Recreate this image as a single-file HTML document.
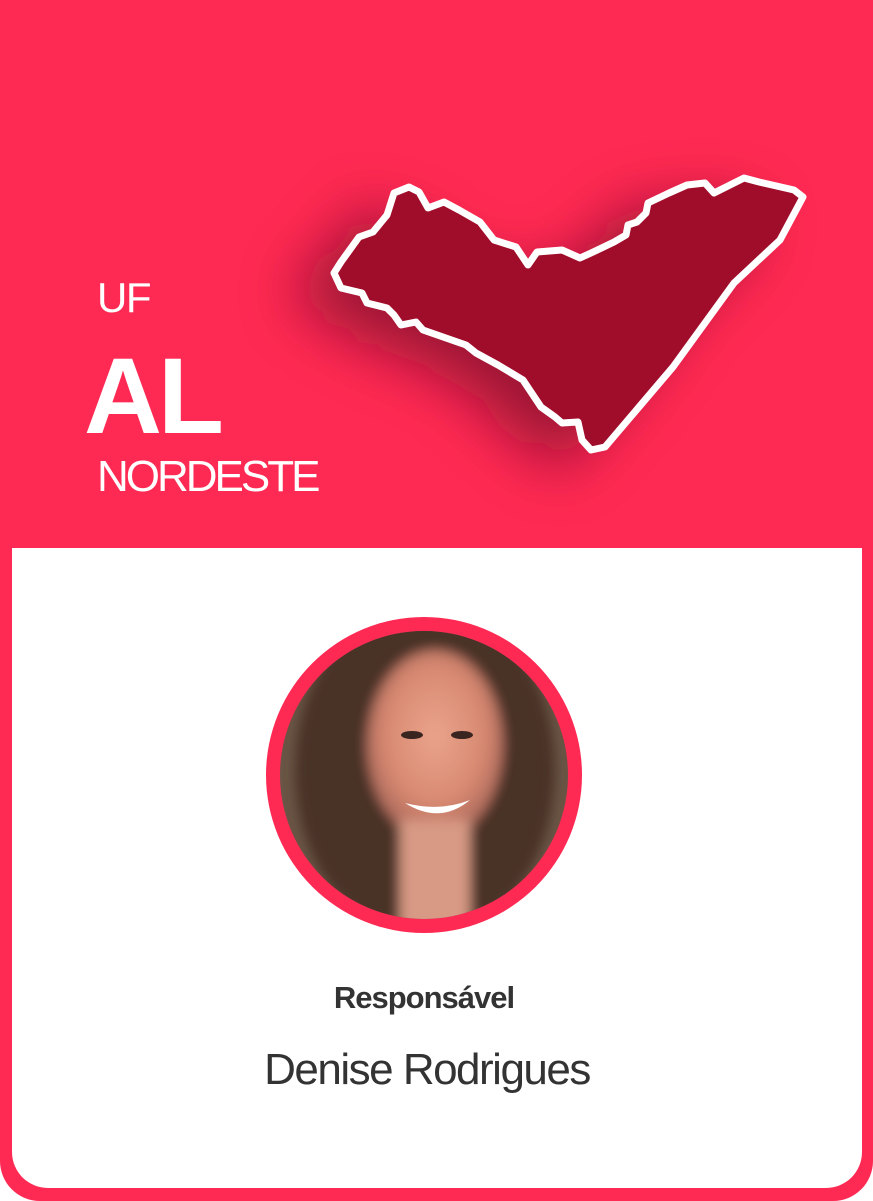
<!DOCTYPE html>
<html><head><meta charset="utf-8"><style>
*{margin:0;padding:0;box-sizing:border-box}
html,body{width:873px;height:1201px;background:#fff;overflow:hidden;font-family:"Liberation Sans",sans-serif}
.card{position:absolute;left:0;top:0;width:873px;height:1201px;background:#ff2a53;border-radius:0 0 40px 40px;overflow:hidden}
.panel{position:absolute;left:12px;top:548px;width:850px;height:640px;background:#fff;border-radius:0 0 36px 36px}
.t{position:absolute;color:#fff;left:97px}
</style></head><body>
<div class="card">
<div class="t" style="top:274px;font-size:42px;letter-spacing:-1.5px">UF</div>
<div class="t" style="left:84px;top:333px;font-size:108px;font-weight:bold;letter-spacing:-4px">AL</div>
<div class="t" style="top:452px;font-size:44px;letter-spacing:-3px">NORDESTE</div>
<svg width="873" height="548" style="position:absolute;left:0;top:0">
<defs><filter id="b" x="-50%" y="-50%" width="200%" height="200%"><feGaussianBlur stdDeviation="30"/></filter></defs>
<path transform="translate(-40,20)" filter="url(#b)" fill="#7a0c2a" opacity="0.75" d="M803,197 L780,240 L734,283 L673,367 L605,447 L591,450 L582,440 L578,422 L562,423 L555,417 L541,407 L523,380 L498,365 L476,353 L466,345 L423,330 L416,322 L401,325 L394,315 L387,308 L367,303 L362,293 L341,288 L334,273 L341,262 L359,237 L373,232 L387,215 L394,193 L409,187 L419,192 L428,208 L444,202 L459,210 L480,222 L494,240 L516,247 L528,265 L537,252 L562,250 L580,258 L591,253 L614,242 L626,235 L628,225 L637,222 L646,213 L648,203 L669,193 L687,185 L705,183 L714,193 L744,178 L759,182 L794,190 Z"/>
<path fill="#a00d2b" stroke="#fff" stroke-width="7" stroke-linejoin="round" d="M803,197 L780,240 L734,283 L673,367 L605,447 L591,450 L582,440 L578,422 L562,423 L555,417 L541,407 L523,380 L498,365 L476,353 L466,345 L423,330 L416,322 L401,325 L394,315 L387,308 L367,303 L362,293 L341,288 L334,273 L341,262 L359,237 L373,232 L387,215 L394,193 L409,187 L419,192 L428,208 L444,202 L459,210 L480,222 L494,240 L516,247 L528,265 L537,252 L562,250 L580,258 L591,253 L614,242 L626,235 L628,225 L637,222 L646,213 L648,203 L669,193 L687,185 L705,183 L714,193 L744,178 L759,182 L794,190 Z"/>
</svg>
<div class="panel"></div>
<svg width="873" height="1201" style="position:absolute;left:0;top:0">
<defs>
<clipPath id="c"><circle cx="424" cy="775" r="144"/></clipPath>
<radialGradient id="f" cx="0.5" cy="0.45" r="0.5"><stop offset="0" stop-color="#eaa48c"/><stop offset="0.7" stop-color="#d98a72"/><stop offset="1" stop-color="#b57060"/></radialGradient>
<filter id="s"><feGaussianBlur stdDeviation="6"/></filter>
</defs>
<circle cx="424" cy="775" r="158" fill="#ff2a53"/>
<g clip-path="url(#c)">
<rect x="270" y="620" width="310" height="310" fill="#6a5646"/>
<g filter="url(#s)">
<ellipse cx="425" cy="770" rx="130" ry="170" fill="#4a3226"/>
<ellipse cx="435" cy="745" rx="68" ry="95" fill="url(#f)"/>
<rect x="400" y="820" width="70" height="110" fill="#d89a84"/>
</g>
<path d="M405 803 Q440 825 470 800 Q440 812 405 803Z" fill="#fff"/>
<ellipse cx="412" cy="735" rx="11" ry="4" fill="#3a2520"/>
<ellipse cx="462" cy="735" rx="11" ry="4" fill="#3a2520"/>
</g>
<text x="424" y="1008" text-anchor="middle" font-family="Liberation Sans" font-weight="bold" font-size="31" fill="#333" letter-spacing="-1">Responsável</text>
<text x="427" y="1084" text-anchor="middle" font-family="Liberation Sans" font-size="44" fill="#333" letter-spacing="-1.5">Denise Rodrigues</text>
</svg>
</div>
</body></html>
